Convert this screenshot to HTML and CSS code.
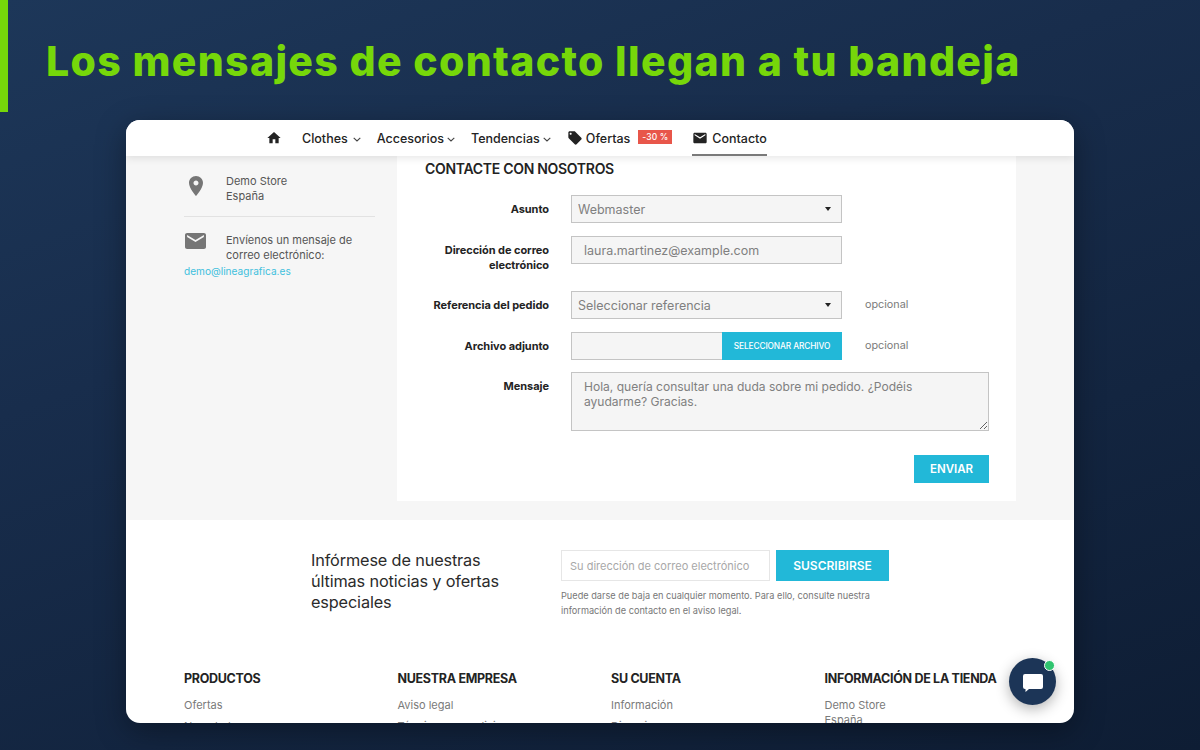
FILE: index.html
```html
<!DOCTYPE html>
<html lang="es">
<head>
    <meta charset="UTF-8">
    <meta name="viewport" content="width=device-width, initial-scale=1.0">
    <title>Los mensajes de contacto llegan a tu bandeja</title>
    <link rel="stylesheet" href="styles.css">
</head>
<body>
    <header class="slide-header">
        <h1>Los mensajes de contacto llegan a tu bandeja</h1>
    </header>

    <div class="card">
        <nav class="nav">
            <a class="nav-home"><svg class="icon-nav" viewBox="0 0 24 24"><path d="M10 20v-6h4v6h5v-8h3L12 3 2 12h3v8z"/></svg></a>
            <a class="nav-item nav-clothes">Clothes <svg class="chev" viewBox="0 0 8 5"><path d="M.7.8 4 4 7.3.8"/></svg></a>
            <a class="nav-item">Accesorios <svg class="chev" viewBox="0 0 8 5"><path d="M.7.8 4 4 7.3.8"/></svg></a>
            <a class="nav-item">Tendencias <svg class="chev" viewBox="0 0 8 5"><path d="M.7.8 4 4 7.3.8"/></svg></a>
            <a class="nav-item nav-offers"><svg class="icon-nav" viewBox="0 0 24 24"><path d="M21.41 11.58l-9-9C12.05 2.22 11.55 2 11 2H4c-1.1 0-2 .9-2 2v7c0 .55.22 1.05.59 1.42l9 9c.36.36.86.58 1.41.58.55 0 1.05-.22 1.41-.59l7-7c.37-.36.59-.86.59-1.41 0-.55-.23-1.06-.59-1.42zM5.5 7C4.67 7 4 6.33 4 5.5S4.67 4 5.5 4 7 4.67 7 5.5 6.33 7 5.5 7z"/></svg> Ofertas <span class="badge">-30 %</span></a>
            <a class="nav-item nav-active"><svg class="icon-nav" viewBox="0 0 24 24"><path d="M20 4H4c-1.1 0-1.99.9-1.99 2L2 18c0 1.1.9 2 2 2h16c1.1 0 2-.9 2-2V6c0-1.1-.9-2-2-2zm0 4l-8 5-8-5V6l8 5 8-5v2z"/></svg> Contacto</a>
        </nav>

        <section class="contact">
            <aside class="store-info">
                <div class="info-row info-address">
                    <svg class="info-icon" viewBox="0 0 24 24"><path d="M12 2C8.13 2 5 5.13 5 9c0 5.25 7 13 7 13s7-7.75 7-13c0-3.87-3.13-7-7-7zm0 9.5c-1.38 0-2.5-1.12-2.5-2.5s1.12-2.5 2.5-2.5 2.5 1.12 2.5 2.5-1.12 2.5-2.5 2.5z"/></svg>
                    <p>Demo Store<br>España</p>
                </div>
                <div class="info-row info-mail">
                    <svg class="info-icon" viewBox="2 4 20 16" preserveAspectRatio="none"><path d="M20 4H4c-1.1 0-1.99.9-1.99 2L2 18c0 1.1.9 2 2 2h16c1.1 0 2-.9 2-2V6c0-1.1-.9-2-2-2zm0 4l-8 5-8-5V6l8 5 8-5v2z"/></svg>
                    <p>Envíenos un mensaje de correo electrónico:</p>
                </div>
                <a class="info-link">demo@lineagrafica.es</a>
            </aside>

            <form class="panel">
                <h2>CONTACTE CON NOSOTROS</h2>

                <div class="form-row row-subject">
                    <label>Asunto</label>
                    <div class="select-wrap">
                        <select><option>Webmaster</option></select>
                    </div>
                </div>

                <div class="form-row row-email">
                    <label>Dirección de correo electrónico</label>
                    <input class="field field-email" type="text" value="laura.martinez@example.com">
                </div>

                <div class="form-row row-order">
                    <label>Referencia del pedido</label>
                    <div class="select-wrap">
                        <select><option>Seleccionar referencia</option></select>
                    </div>
                    <span class="optional">opcional</span>
                </div>

                <div class="form-row row-file">
                    <label>Archivo adjunto</label>
                    <div class="file-field">
                        <span class="file-name"></span>
                        <span class="file-btn">SELECCIONAR ARCHIVO</span>
                    </div>
                    <span class="optional">opcional</span>
                </div>

                <div class="form-row row-message">
                    <label>Mensaje</label>
                    <textarea class="field message">Hola, quería consultar una duda sobre mi pedido. ¿Podéis ayudarme? Gracias.</textarea>
                </div>

                <div class="form-actions">
                    <button type="button" class="send-btn">ENVIAR</button>
                </div>
            </form>
        </section>

        <section class="newsletter">
            <p class="news-title">Infórmese de nuestras últimas noticias y ofertas especiales</p>
            <div class="news-form">
                <div class="news-fields">
                    <input class="news-input" type="text" placeholder="Su dirección de correo electrónico">
                    <button type="button" class="news-btn">SUSCRIBIRSE</button>
                </div>
                <p class="news-note">Puede darse de baja en cualquier momento. Para ello, consulte nuestra información de contacto en el aviso legal.</p>
            </div>
        </section>

        <footer class="footer">
            <div class="footer-col">
                <h3>PRODUCTOS</h3>
                <a>Ofertas</a>
                <a>Novedades</a>
            </div>
            <div class="footer-col">
                <h3>NUESTRA EMPRESA</h3>
                <a>Aviso legal</a>
                <a>Términos y condiciones</a>
            </div>
            <div class="footer-col">
                <h3>SU CUENTA</h3>
                <a>Información</a>
                <a>Direcciones</a>
            </div>
            <div class="footer-col footer-store">
                <h3>INFORMACIÓN DE LA TIENDA</h3>
                <p>Demo Store<br>España</p>
            </div>
        </footer>

        <button type="button" class="chat-btn" aria-label="Chat">
            <svg viewBox="0 0 20 18"><path d="M2 0h16a2 2 0 0 1 2 2v11a2 2 0 0 1-2 2H6l-3.500 3v-3H2a2 2 0 0 1-2-2V2a2 2 0 0 1 2-2z"/></svg>
            <span class="chat-dot"></span>
        </button>
    </div>
</body>
</html>
```

FILE: styles.css
```css
* {
    box-sizing: border-box;
}

body {
    margin: 0;
    width: 1200px;
    height: 750px;
    overflow: hidden;
    font-family: 'Inter', 'Liberation Sans', sans-serif;
    background: linear-gradient(160deg, #1d3759 0%, #182d4c 35%, #0e1d34 100%);
    color: #232323;
}

.slide-header {
    height: 112px;
    border-left: 8px solid #76d70a;
    padding: 36px 0 0 38px;
    margin-bottom: 8px;
}

h1 {
    margin: 0;
    font-size: 41px;
    line-height: 50px;
    font-weight: 800;
    letter-spacing: 1.34px;
    color: #76d70a;
    white-space: nowrap;
}

.card {
    position: relative;
    width: 948px;
    height: 603px;
    margin-left: 126px;
    background: #fff;
    border-radius: 14px;
    overflow: hidden;
    box-shadow: 0 8px 30px rgba(0,0,0,0.35);
}

/* nav */
.nav {
    position: relative;
    z-index: 2;
    display: flex;
    align-items: stretch;
    height: 36px;
    padding-left: 140px;
    background: #fff;
    box-shadow: 0 2px 8px rgba(0,0,0,0.1);
    font-size: 12.500px;
    font-weight: 500;
}

.nav a {
    display: flex;
    align-items: center;
    color: #232323;
    white-space: nowrap;
}

.nav-home {
    margin-right: 20px;
}

.nav-item {
    gap: 3px;
    margin-right: 16px;
}

.nav-clothes {
    gap: 5px;
}

.nav-offers {
    margin-right: 20px;
}

.nav-active {
    gap: 4px;
    border-bottom: 2px solid #7a7a7a;
    padding-top: 2px;
}

.icon-nav {
    width: 16px;
    height: 16px;
    fill: #232323;
}

.chev {
    width: 8px;
    height: 5px;
    margin-top: 2px;
    fill: none;
    stroke: #444;
    stroke-width: 1.100;
}

.badge {
    background: #e8564a;
    color: #fff;
    font-size: 8.500px;
    line-height: 14px;
    padding: 0 4px;
    margin-left: 5px;
    margin-bottom: 2px;
    letter-spacing: 0.1px;
}

/* contact block */
.contact {
    display: flex;
    gap: 22px;
    height: 364px;
    padding-left: 58px;
    background: #f6f6f6;
}

.store-info {
    width: 191px;
    font-size: 11px;
    line-height: 15px;
    color: #555;
}

.store-info p {
    margin: 0;
}

.info-row {
    display: flex;
}

.info-address {
    height: 61px;
    padding-top: 18px;
    border-bottom: 1px solid #e2e2e2;
}

.info-mail {
    padding-top: 16px;
}

.info-icon {
    flex: none;
    fill: #767676;
}

.info-address .info-icon {
    width: 24px;
    height: 24px;
    margin: 0 18px 0 0;
}

.info-mail .info-icon {
    width: 21px;
    height: 16px;
    margin: 0 20px 0 1px;
}

.info-link {
    display: block;
    margin-top: 1px;
    font-size: 10.100px;
    color: #3fc0dd;
}

.panel {
    width: 619px;
    height: 345px;
    padding: 0 27px 0 28px;
    background: #fff;
}

.panel h2 {
    margin: 0;
    padding-top: 4px;
    height: 39px;
    font-size: 14px;
    line-height: 18px;
    font-weight: 600;
    letter-spacing: -0.3px;
    color: #232323;
}

.form-row {
    display: grid;
    grid-template-columns: 124px 271px auto;
    column-gap: 22px;
    align-items: start;
}

.form-row label {
    font-size: 11px;
    line-height: 15px;
    font-weight: 700;
    letter-spacing: -0.05px;
    text-align: right;
    color: #232323;
    padding-top: 7px;
}

.row-email {
    margin-top: 13px;
}

.row-order {
    margin-top: 18px;
}

.row-file {
    margin-top: 13px;
}

.row-message {
    margin-top: 12px;
    grid-template-columns: 124px 418px;
}

.select-wrap {
    position: relative;
}

.select-wrap::after {
    content: "";
    position: absolute;
    right: 11px;
    top: 12px;
    border-style: solid;
    border-width: 4px 3.500px 0;
    border-color: #232323 transparent transparent;
}

select, .field {
    display: block;
    width: 100%;
    height: 28px;
    border: 1px solid #c4c4c4;
    border-radius: 0;
    background: #f5f5f5;
    color: #808080;
    font-family: inherit;
    font-size: 12.500px;
    outline: none;
}

select {
    appearance: none;
    padding: 0 6px;
}

.field-email {
    padding: 0 12px;
}

.optional {
    font-size: 10.800px;
    line-height: 27px;
    padding-left: 1px;
    color: #7a7a7a;
}

.file-field {
    display: flex;
    height: 28px;
}

.file-name {
    flex: 1;
    background: #f5f5f5;
    border: 1px solid #c4c4c4;
    border-right: 0;
}

.file-btn {
    width: 120px;
    background: #22b8d8;
    color: #fff;
    font-size: 8.300px;
    font-weight: 500;
    line-height: 28px;
    text-align: center;
    letter-spacing: -0.1px;
}

.message {
    height: 59px;
    padding: 6px 12px;
    font-size: 12.050px;
    line-height: 15px;
    resize: both;
}

.form-actions {
    display: flex;
    justify-content: flex-end;
    margin-top: 24px;
}

.send-btn {
    width: 75px;
    height: 28px;
    border: none;
    background: #22b8d8;
    color: #fff;
    font-family: inherit;
    font-size: 11.500px;
    font-weight: 600;
}

/* newsletter */
.newsletter {
    display: flex;
    height: 128px;
    padding: 30px 0 0 185px;
}

.news-title {
    width: 250px;
    margin: 0;
    padding-right: 50px;
    font-size: 16.300px;
    line-height: 21px;
    letter-spacing: -0.15px;
    color: #2b2b2b;
}

.news-fields {
    display: flex;
    gap: 6px;
}

.news-input {
    width: 209px;
    height: 31px;
    padding: 0 8px;
    border: 1px solid #e6e6e6;
    background: #fff;
    font-family: inherit;
    font-size: 11px;
    outline: none;
}

.news-input::placeholder {
    color: #a8a8a8;
}

.news-btn {
    width: 113px;
    height: 31px;
    border: none;
    background: #22b8d8;
    color: #fff;
    font-family: inherit;
    font-size: 12px;
    font-weight: 600;
}

.news-note {
    width: 330px;
    margin: 7px 0 0;
    font-size: 9.200px;
    line-height: 15px;
    color: #777;
}

/* footer */
.footer {
    display: grid;
    grid-template-columns: repeat(4, 213.500px);
    padding: 22px 0 0 58px;
}

.footer h3 {
    margin: 0 0 8px;
    font-size: 12.500px;
    line-height: 17px;
    font-weight: 700;
    letter-spacing: -0.3px;
    color: #232323;
    white-space: nowrap;
}

.footer a {
    display: block;
    font-size: 11px;
    line-height: 20px;
    color: #7a7a7a;
}

.footer a + a {
    margin-top: 1px;
}

.footer p {
    margin: 0;
    font-size: 11px;
    line-height: 15px;
    padding-top: 2.500px;
    color: #7a7a7a;
}

/* chat bubble sits over the footer */
.chat-btn {
    position: absolute;
    right: 18px;
    bottom: 18px;
    width: 47px;
    height: 47px;
    padding: 15.500px 13.500px;
    border: none;
    border-radius: 50%;
    background: #1c3557;
    box-shadow: 0 4px 14px rgba(0,0,0,0.3);
}

.chat-btn svg {
    display: block;
    width: 20px;
    height: 18px;
    fill: #fff;
}

.chat-dot {
    position: absolute;
    top: 1.500px;
    right: 1.500px;
    width: 11px;
    height: 11px;
    border-radius: 50%;
    background: #2fc46f;
    border: 1.500px solid #fff;
}
```
